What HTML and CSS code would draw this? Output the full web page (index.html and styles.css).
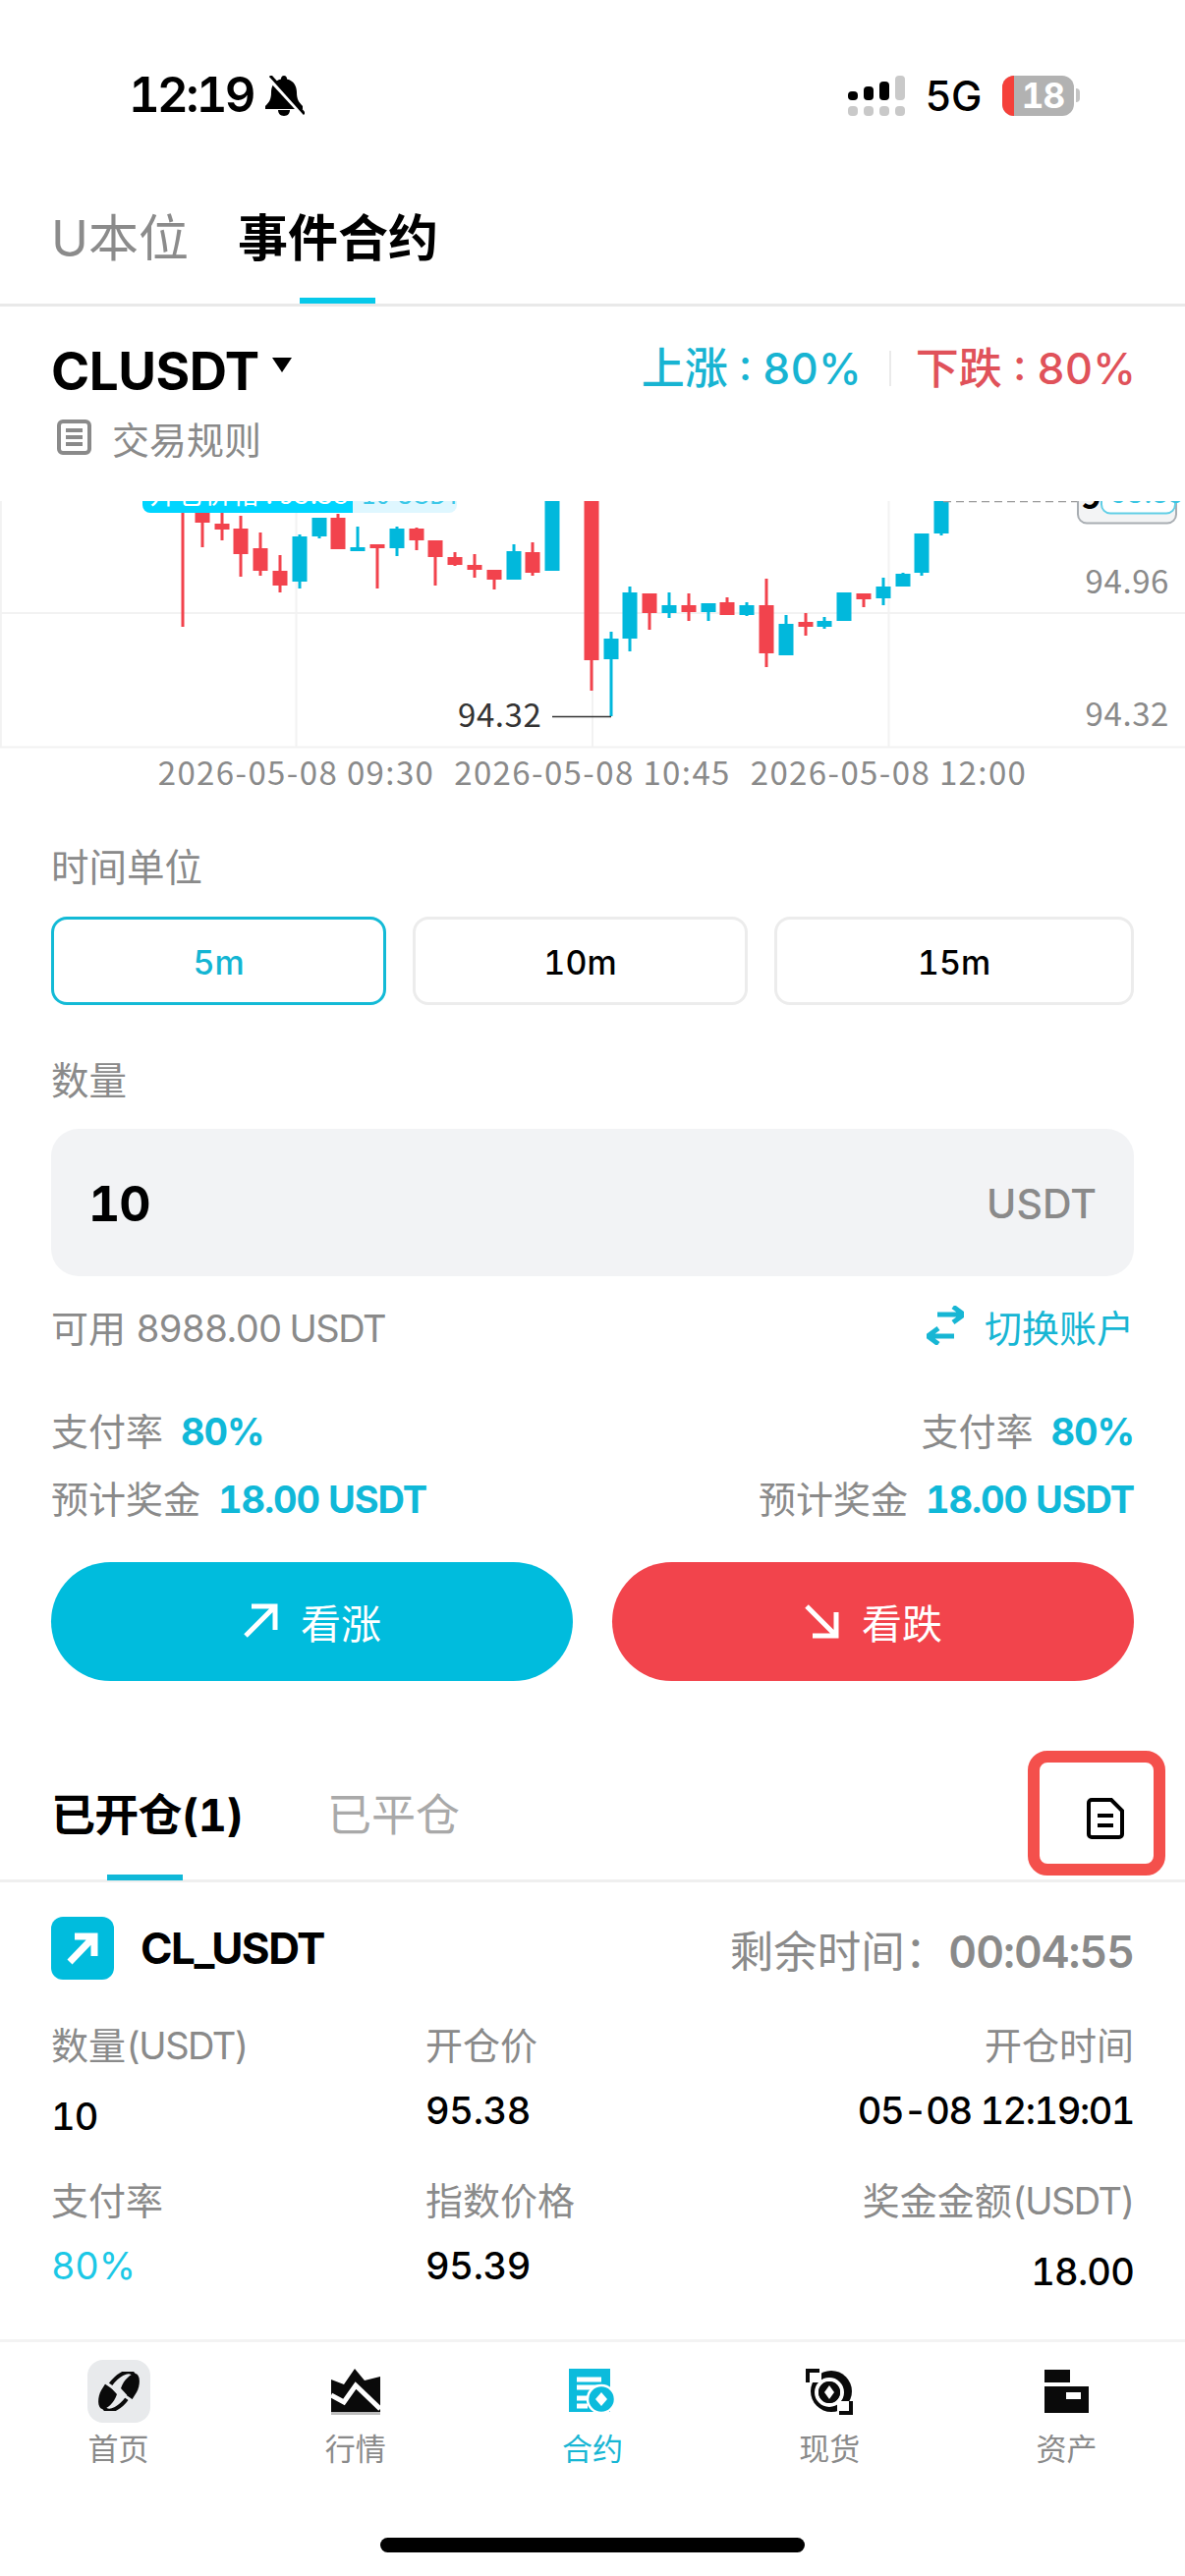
FILE: index.html
```html
<!DOCTYPE html>
<html lang="zh-CN">
<head>
<meta charset="utf-8">
<title>事件合约</title>
<link rel="stylesheet" href="styles.css">
</head>
<body>
<div class="page">

  <header class="statusbar">
    <div class="status-left">
      <span class="clock">12:19</span>
      <svg class="bell" viewBox="0 0 41 41"><path d="M20 0c-2 0-3 1.500-3 3.500C10 5 7 11 7 17c0 7-2 10-6 14v3h38v-3c-4-4-6-7-6-14 0-6-3-12-10-13.500C23 1.500 22 0 20 0z"/><path d="M14 35h12c0 3-2 6-6 6s-6-3-6-6z"/><path class="bell-gap" d="M3 0l36 39"/><path class="bell-slash" d="M6 0l35 39"/></svg>
    </div>
    <div class="status-right">
      <svg class="signal" viewBox="0 0 58 41">
        <rect x="0" y="16" width="10" height="9" rx="4"/>
        <rect x="16" y="11" width="10" height="14" rx="4"/>
        <rect x="32" y="6" width="10" height="19" rx="4"/>
        <rect class="dim" x="48" y="0" width="10" height="25" rx="4"/>
        <rect class="dim" x="0" y="31" width="10" height="10" rx="4"/>
        <rect class="dim" x="16" y="31" width="10" height="10" rx="4"/>
        <rect class="dim" x="32" y="31" width="10" height="10" rx="4"/>
        <rect class="dim" x="48" y="31" width="10" height="10" rx="4"/>
      </svg>
      <span class="network">5G</span>
      <div class="battery"><span class="battery-low"></span><span class="battery-level">18</span></div>
      <span class="battery-nub"></span>
    </div>
  </header>

  <nav class="top-tabs">
    <span class="top-tab">U本位</span>
    <span class="top-tab top-tab-active">事件合约</span>
  </nav>

  <section class="market">
    <div class="market-row">
      <div class="symbol"><span>CLUSDT</span><span class="caret"></span></div>
      <div class="odds">
        <span class="odds-up">上涨 : 80%</span>
        <span class="odds-divider"></span>
        <span class="odds-down">下跌 : 80%</span>
      </div>
    </div>
    <div class="rules">
      <svg class="rules-icon" viewBox="0 0 35 36"><rect x="2" y="2" width="31" height="32" rx="4"/><path d="M9 11h17M9 18h17M9 25h17"/></svg>
      <span>交易规则</span>
    </div>
  </section>

  <svg class="chart" viewBox="0 510 1206 300">
    <path class="grid" d="M0.800 510V760M301.500 510V760M603 510V760M904.500 510V760M0 624H1206M0 760.500H1206"/>
    <path class="wick down" d="M186 510V638M206 510V557M226 510V550M245 525V587M265 542V586M285 565V603M344 523V559M384 554V599M424 537V560M443 550V596M463 562V576M483 564V588M503 580V600M542 552V586M602 510V703M661 604V641M701 604V632M740 608V626M780 589V679M820 624V647M879 604V618"/>
    <path class="body down" d="M206 510V532M226 533V539M245 538V564M265 558V581M285 581V596M344 527V559M384 554V558M424 538V550M443 550V567M463 567V575M483 575V580M503 580V590M542 562V583M602 510V672M661 604V624M701 616V623M740 613V626M780 616V665M820 633V638M879 604V610"/>
    <path class="wick up" d="M305 544V599M325 527V548M364 536V561M404 536V566M523 554V590M622 643V729M641 597V663M681 603V629M721 614V632M760 613V627M800 626V667M839 628V640M899 588V616M919 583V597M938 543V586M958 510V545"/>
    <path class="body up" d="M305 546V592M325 527V546M364 557V561M404 538V558M523 561V590M562 510V581M622 650V671M641 603V650M681 616V624M721 614V623M760 616V626M800 635V667M839 632V638M859 603V632M899 597V609M919 584V597M938 543V583M958 510V543"/>

    <!-- open-position marker, cut by the top edge of the plot -->
    <path class="marker-pale" d="M340 490H465V514a8 8 0 0 1-8 8H340z"/>
    <path class="marker-solid" d="M145 490H359V522H153a8 8 0 0 1-8-8z"/>
    <text class="marker-text" x="152" y="513">开仓价格 : 95.38</text>
    <text class="marker-text-pale" x="368" y="513">10 USDT</text>

    <!-- current price tag -->
    <path class="price-line" d="M960 510.500H1096"/>
    <rect class="price-tag" x="1097" y="480" width="100" height="52.500" rx="9"/>
    <rect class="price-tag-inner" x="1121" y="480" width="75" height="42.500" rx="9"/>
    <text class="price-tag-num" x="1100" y="518">9</text>
    <text class="price-tag-val" x="1131" y="512">95.39</text>

    <!-- lowest price callout -->
    <path class="low-line" d="M562 729.500H622"/>
    <text class="low-text" x="466" y="739.500">94.32</text>

    <text class="axis-y" x="1190" y="604">94.96</text>
    <text class="axis-y" x="1190" y="739">94.32</text>
    <text class="axis-x" x="301.500" y="799">2026-05-08 09:30</text>
    <text class="axis-x" x="603" y="799">2026-05-08 10:45</text>
    <text class="axis-x" x="904.500" y="799">2026-05-08 12:00</text>
  </svg>

  <section class="form">
    <div class="field-label">时间单位</div>
    <div class="intervals">
      <div class="interval interval-active">5m</div>
      <div class="interval">10m</div>
      <div class="interval">15m</div>
    </div>
    <div class="field-label field-label-gap">数量</div>
    <div class="amount">
      <span class="amount-value">10</span>
      <span class="amount-unit">USDT</span>
    </div>
    <div class="balance">
      <span>可用 <span class="latin">8988.00 USDT</span></span>
      <span class="switch">
        <svg class="switch-icon" viewBox="0 0 38 40"><path d="M11 9h27M27 1l11 8-11 8M28 31H1M12 23L1 31l11 8"/></svg>
        切换账户
      </span>
    </div>
    <div class="payout-row payout-first">
      <span>支付率<b>80%</b></span>
      <span>支付率<b>80%</b></span>
    </div>
    <div class="payout-row payout-second">
      <span>预计奖金<b>18.00 USDT</b></span>
      <span>预计奖金<b>18.00 USDT</b></span>
    </div>
    <div class="actions">
      <div class="action action-up">
        <svg class="action-icon" viewBox="0 0 36 36"><path d="M3 33L33 3M9 3h24v24"/></svg>
        看涨
      </div>
      <div class="action action-down">
        <svg class="action-icon" viewBox="0 0 36 36"><path d="M3 3l30 30M33 9v24H9"/></svg>
        看跌
      </div>
    </div>
  </section>

  <section class="pos-tabs">
    <span class="pos-tab pos-tab-active">已开仓(1)</span>
    <span class="pos-tab">已平仓</span>
    <svg class="doc-icon" viewBox="0 0 38 42"><path d="M2 5a3 3 0 0 1 3-3h20l11 11v24a3 3 0 0 1-3 3H5a3 3 0 0 1-3-3z"/><path d="M11 18h16M11 28h16"/></svg>
    <div class="highlight-frame"></div>
  </section>

  <section class="position">
    <div class="position-head">
      <span class="pos-badge"><svg viewBox="0 0 64 64"><path d="M19 46L43 21M24 20h20v20"/></svg></span>
      <span class="pos-symbol">CL_USDT</span>
      <span class="pos-timer">剩余时间：<b>00:04:55</b></span>
    </div>
    <div class="details">
      <div class="cell"><div class="cell-label">数量<span class="latin">(USDT)</span></div><div class="cell-value cell-value-low">10</div></div>
      <div class="cell"><div class="cell-label">开仓价</div><div class="cell-value">95.38</div></div>
      <div class="cell cell-end"><div class="cell-label">开仓时间</div><div class="cell-value cell-value-time">05-08 12:19:01</div></div>
      <div class="cell"><div class="cell-label">支付率</div><div class="cell-value cell-value-accent">80%</div></div>
      <div class="cell"><div class="cell-label">指数价格</div><div class="cell-value">95.39</div></div>
      <div class="cell cell-end"><div class="cell-label">奖金金额<span class="latin">(USDT)</span></div><div class="cell-value cell-value-low">18.00</div></div>
    </div>
  </section>

  <footer class="tabbar">
    <div class="tabbar-items">
      <div class="tabbar-item">
        <span class="tabbar-icon tabbar-icon-home">
          <svg class="ic-home" viewBox="0 0 48 40"><ellipse class="ic-outline" cx="24" cy="20" rx="11" ry="23" transform="rotate(36 24 20)"/><path class="ic-black" d="M26 17C29 8 36 2 41 2c5 1 5 12 1 19l-5 8z"/><path class="ic-black" d="M22 23C19 32 12 38 7 38c-5-1-5-12-1-19l5-8z"/><path class="ic-cut-thin" d="M6 8l36 25"/></svg>
        </span>
        <span class="tabbar-label">首页</span>
      </div>
      <div class="tabbar-item">
        <span class="tabbar-icon">
          <svg class="ic-market" viewBox="0 0 50 47"><path class="ic-black" d="M0 11l13 5L24 0l10 12 16-4v36H0z"/><path class="ic-cut" d="M0 27l13 7 12-17 25 24"/><rect class="ic-grey" x="0" y="44" width="50" height="3"/></svg>
        </span>
        <span class="tabbar-label">行情</span>
      </div>
      <div class="tabbar-item tabbar-item-active">
        <span class="tabbar-icon">
          <svg class="ic-contract" viewBox="0 0 48 46"><rect class="ic-accent" x="0" y="0" width="42" height="44"/><path class="ic-cut" d="M8 11h25M8 19h25M8 30h11M8 38h11"/><circle class="ic-accent ic-ring" cx="33" cy="31" r="14"/><path class="ic-white" d="M33 24l6 7-6 7-6-7z"/></svg>
        </span>
        <span class="tabbar-label">合约</span>
      </div>
      <div class="tabbar-item">
        <span class="tabbar-icon">
          <svg class="ic-spot" viewBox="0 0 48 47"><circle class="ic-black" cx="26" cy="23" r="21"/><path class="ic-white" d="M0 0h16v14H0zM32 33h16v14H32z"/><circle class="ic-ring-cut" cx="24" cy="24" r="13"/><circle class="ic-black" cx="24" cy="24" r="11"/><path class="ic-white" d="M24 17l5 7-5 7-5-7z"/><path class="ic-bracket" d="M2 14V2h12M46 33v12H34"/></svg>
        </span>
        <span class="tabbar-label">现货</span>
      </div>
      <div class="tabbar-item">
        <span class="tabbar-icon">
          <svg class="ic-assets" viewBox="0 0 45 44"><rect class="ic-black" x="0" y="0" width="26" height="13"/><rect class="ic-black" x="0" y="17" width="45" height="27"/><rect class="ic-white" x="22" y="23" width="15" height="7"/></svg>
        </span>
        <span class="tabbar-label">资产</span>
      </div>
    </div>
    <div class="home-bar"></div>
  </footer>

</div>
</body>
</html>
```

FILE: styles.css
```css
* { box-sizing: border-box; }

html, body { margin: 0; padding: 0; background: #fff; }

body {
  font-family: Inter, "Noto Sans CJK SC", sans-serif;
  font-variant-numeric: tabular-nums;
  color: #000;
}

.page {
  width: 1206px;
  height: 2622px;
  overflow: hidden;
  background: #fff;
}

.latin { letter-spacing: -1.500px; }

/* status bar */
.statusbar {
  height: 194px;
  display: flex;
  align-items: center;
  justify-content: space-between;
  padding: 0 107px 0 131px;
}
.status-left, .status-right { display: flex; align-items: center; }
.clock { font-size: 49px; font-weight: 600; letter-spacing: -2.600px; line-height: 60px; }
.bell { width: 41px; height: 41px; margin-left: 11px; fill: #000; }
.bell-gap { stroke: #fff; stroke-width: 5; fill: none; }
.bell-slash { stroke: #000; stroke-width: 3; fill: none; }
.signal { width: 58px; height: 41px; fill: #000; }
.signal .dim { fill: #c9c9c9; }
.network { font-size: 42px; font-weight: 500; margin: 0 21px 0 20px; line-height: 41px; letter-spacing: -0.500px; }
.battery {
  position: relative;
  width: 73px;
  height: 41px;
  border-radius: 12px;
  background: #b2b2b2;
  overflow: hidden;
  display: flex;
  align-items: center;
  justify-content: center;
}
.battery-low { position: absolute; left: 0; top: 0; bottom: 0; width: 12px; background: #f5403a; }
.battery-level { position: relative; color: #fff; font-size: 35px; font-weight: 700; line-height: 41px; padding-left: 10px; letter-spacing: -1px; }
.battery-nub { width: 4px; height: 14px; margin-left: 2px; background: #c4c4c4; border-radius: 0 4px 4px 0; }

/* top tabs */
.top-tabs {
  position: relative;
  height: 118px;
  display: flex;
  gap: 50px;
  padding-left: 52px;
  border-bottom: 3px solid #e9e9e9;
}
.top-tab {
  position: relative;
  height: 118px;
  font-size: 51px;
  line-height: 98px;
  color: #8b8b8b;
  font-weight: 400;
}
.top-tab-active { color: #000; font-weight: 700; }
.top-tab-active::after {
  content: "";
  position: absolute;
  left: 63px;
  width: 77px;
  bottom: 3px;
  height: 6px;
  background: #06c9ea;
}

/* market header */
.market { height: 198px; padding: 36px 52px 0; }
.market-row { display: flex; align-items: center; justify-content: space-between; height: 60px; }
.symbol { display: flex; align-items: center; font-size: 53px; font-weight: 700; letter-spacing: -0.500px; }
.caret {
  width: 0;
  height: 0;
  margin: -14px 0 0 13px;
  border-left: 10.500px solid transparent;
  border-right: 10.500px solid transparent;
  border-top: 15px solid #000;
}
.odds { display: flex; align-items: center; font-size: 44px; font-weight: 500; line-height: 60px; margin: -6px -2px 0 0; }
.odds-up { color: #18b4d2; }
.odds-down { color: #e0525a; }
.odds-divider { width: 2px; height: 36px; background: #eaeaea; margin: 0 25px 0 28px; }
.rules { display: flex; align-items: center; gap: 21px; margin-top: 11px; height: 52px; padding-left: 6px; color: #8a8a8a; font-size: 38px; }
.rules-icon { width: 35px; height: 36px; fill: none; stroke: #8a8a8a; stroke-width: 4; }

/* chart */
.chart { display: block; width: 1206px; height: 300px; }
.chart text { font-family: "Noto Sans CJK SC", sans-serif; }
.grid { fill: none; stroke: #f2f2f2; stroke-width: 2; }
.wick, .body { fill: none; }
.wick { stroke-width: 3; }
.body { stroke-width: 15; }
.up { stroke: #01b8dc; }
.down { stroke: #f2434d; }
.marker-solid { fill: #00d5ff; }
.marker-pale { fill: #dff7ff; }
.marker-text { fill: #fff; font-size: 28px; }
.marker-text-pale { fill: #3cc8e8; font-size: 26px; }
.price-line { fill: none; stroke: #9a9a9a; stroke-width: 1.500; stroke-dasharray: 8 5; }
.price-tag { fill: #f3f4f5; stroke: #a8adb2; stroke-width: 2; }
.price-tag-inner { fill: #fff; stroke: #62cfe6; stroke-width: 2; }
.price-tag-num { fill: #000; font-size: 36px; font-weight: 700; }
.price-tag-val { fill: #38c4e2; font-size: 30px; }
.low-line { fill: none; stroke: #333; stroke-width: 1.500; }
.low-text { fill: #333; font-size: 33px; letter-spacing: 0.600px; }
.axis-y { fill: #8a8a8a; font-size: 33px; letter-spacing: 0.600px; text-anchor: end; }
.axis-x { fill: #8a8a8a; font-size: 33px; letter-spacing: 1.400px; text-anchor: middle; }

/* order form */
.form { padding: 48px 52px 0; }
.field-label { font-size: 38.500px; line-height: 50px; color: #8a8a8a; }
.field-label-gap { margin-top: 52px; }
.intervals { display: grid; grid-template-columns: 341px 341px 1fr; gap: 27px; margin-top: 25px; }
.interval {
  height: 90px;
  padding-top: 2px;
  border: 3px solid #ececec;
  border-radius: 16px;
  display: flex;
  align-items: center;
  justify-content: center;
  font-size: 34px;
  font-weight: 500;
}
.interval-active { border-color: #13bad6; color: #13b5d3; }
.amount {
  height: 150px;
  margin-top: 24px;
  padding: 2px 38px 0 38px;
  display: flex;
  align-items: center;
  justify-content: space-between;
  background: #f2f3f5;
  border-radius: 28px;
}
.amount-value { font-size: 50px; font-weight: 700; letter-spacing: -1px; }
.amount-unit { font-size: 41px; font-weight: 500; color: #8a8a8a; }
.balance {
  display: flex;
  justify-content: space-between;
  align-items: center;
  height: 50px;
  margin-top: 25px;
  color: #8a8a8a;
  font-size: 38px;
}
.switch { display: flex; align-items: center; gap: 21px; color: #17b6d4; }
.switch-icon { width: 38px; height: 40px; fill: none; stroke: #17b6d4; stroke-width: 5; }
.payout-row {
  display: flex;
  justify-content: space-between;
  height: 50px;
  line-height: 50px;
  color: #8a8a8a;
  font-size: 38px;
}
.payout-row b { color: #10b8d8; font-weight: 700; margin-left: 18px; letter-spacing: -1.100px; }
.payout-first { margin-top: 58px; }
.payout-second { margin-top: 19px; }
.actions { display: flex; gap: 40px; margin-top: 39px; }
.action {
  flex: 1;
  height: 121px;
  padding-bottom: 2px;
  border-radius: 61px;
  display: flex;
  align-items: center;
  justify-content: center;
  gap: 23px;
  color: #fff;
  font-size: 41px;
}
.action-up { background: #00bcdd; }
.action-down { background: #f2444c; }
.action-icon { width: 36px; height: 36px; fill: none; stroke: #fff; stroke-width: 5; }

/* position tabs */
.pos-tabs {
  position: relative;
  height: 205px;
  display: flex;
  align-items: flex-start;
  padding: 107px 0 0 52px;
  border-bottom: 3px solid #efefef;
}
.pos-tab { font-size: 45px; line-height: 60px; color: #a9a9a9; margin-right: 86px; }
.pos-tab-active { position: relative; height: 95px; color: #000; font-weight: 700; letter-spacing: -0.700px; }
.pos-tab-active::after {
  content: "";
  position: absolute;
  left: 57px;
  bottom: -1px;
  width: 77px;
  height: 6px;
  background: #10b8d8;
}
.doc-icon {
  width: 38px;
  height: 42px;
  margin: 12px 62px 0 auto;
  fill: none;
  stroke: #000;
  stroke-width: 4;
}
.highlight-frame {
  position: absolute;
  left: 1046px;
  top: 71px;
  width: 140px;
  height: 127px;
  border: 12px solid #f4504c;
  border-radius: 20px;
}

/* open position card */
.position { height: 465px; padding: 35px 52px 0; }
.position-head { display: flex; align-items: center; height: 64px; }
.pos-badge {
  width: 64px;
  height: 64px;
  border-radius: 12px;
  background: #00bcdd;
  display: flex;
}
.pos-badge svg { width: 64px; height: 64px; fill: none; stroke: #fff; stroke-width: 7; }
.pos-symbol { margin-left: 27px; font-size: 44px; font-weight: 700; letter-spacing: -1.500px; }
.pos-timer { margin-left: auto; color: #8a8a8a; font-size: 44.500px; }
.pos-timer b { font-weight: 600; letter-spacing: -1px; }
.details {
  display: grid;
  grid-template-columns: 381px 1fr auto;
  row-gap: 42px;
  margin-top: 42px;
}
.cell-end { text-align: right; }
.cell-label { font-size: 38px; line-height: 50px; color: #8a8a8a; }
.cell-value { margin-top: 16px; height: 50px; font-size: 38px; line-height: 50px; font-weight: 500; letter-spacing: -0.300px; }
.cell-value-low { padding-top: 6px; letter-spacing: -0.800px; }
.cell-value-time { letter-spacing: -1.450px; }
.cell-value-accent { color: #1cc8e6; font-weight: 400; }

/* bottom navigation */
.tabbar {
  height: 241px;
  background: #fff;
  border-top: 3px solid #f3f3f3;
  padding-top: 18px;
}
.tabbar-items { display: grid; grid-template-columns: repeat(5, 1fr); }
.tabbar-item { display: flex; flex-direction: column; align-items: center; }
.tabbar-icon { width: 64px; height: 64px; display: flex; align-items: center; justify-content: center; }
.tabbar-icon-home { background: #e8eaec; border-radius: 16px; }
.tabbar-label { margin-top: 7px; font-size: 31px; line-height: 40px; color: #8a8a8a; }
.tabbar-item-active .tabbar-label { color: #17b6d4; }
.home-bar { width: 432px; height: 15px; margin: 70px auto 0; background: #000; border-radius: 8px; }

.ic-home { width: 48px; height: 40px; overflow: hidden; }
.ic-market { width: 50px; height: 47px; }
.ic-contract { width: 48px; height: 46px; }
.ic-spot { width: 48px; height: 47px; }
.ic-assets { width: 45px; height: 44px; }
.ic-black { fill: #0a0a0a; }
.ic-outline { fill: none; stroke: #0a0a0a; stroke-width: 4; }
.ic-accent { fill: #0cbbdc; }
.ic-ring { stroke: #fff; stroke-width: 2.500; }
.ic-ring-cut { fill: none; stroke: #fff; stroke-width: 4; }
.ic-white { fill: #fff; }
.ic-grey { fill: #bdbdbd; }
.ic-cut { fill: none; stroke: #fff; stroke-width: 5; }
.ic-cut-thin { fill: none; stroke: #e8eaec; stroke-width: 3; }
.ic-bracket { fill: none; stroke: #0a0a0a; stroke-width: 4; }
```
